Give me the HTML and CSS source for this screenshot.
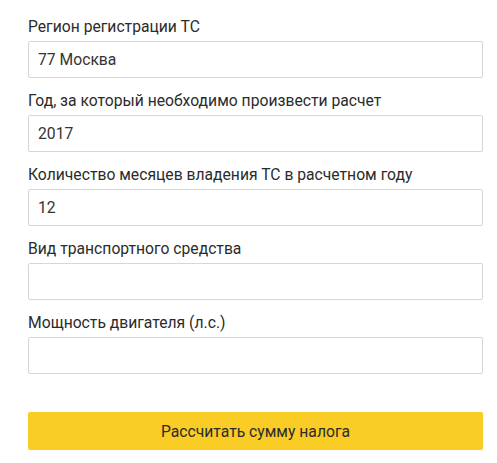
FILE: index.html
```html
<!DOCTYPE html>
<html lang="ru">
<head>
<meta charset="utf-8">
<link rel="stylesheet" href="styles.css">
</head>
<body>
<form class="calc">
  <div class="field">
    <label class="label">Регион регистрации ТС</label>
    <div class="input">77 Москва</div>
  </div>
  <div class="field">
    <label class="label">Год, за который необходимо произвести расчет</label>
    <div class="input">2017</div>
  </div>
  <div class="field">
    <label class="label">Количество месяцев владения ТС в расчетном году</label>
    <div class="input">12</div>
  </div>
  <div class="field">
    <label class="label">Вид транспортного средства</label>
    <div class="input"></div>
  </div>
  <div class="field">
    <label class="label">Мощность двигателя (л.с.)</label>
    <div class="input"></div>
  </div>
  <button type="button" class="submit">Рассчитать сумму налога</button>
</form>
</body>
</html>
```
FILE: styles.css
```css
html, body { margin: 0; padding: 0; background: #fff; }
body { font-family: Roboto, "Noto Sans", sans-serif; color: #2b2b2b; }
.calc {
  width: 455px;
  padding: 17px 0 0 28px;
  display: flex;
  flex-direction: column;
}
.field {
  display: flex;
  flex-direction: column;
  gap: 4px;
  margin-bottom: 13px;
}
.label {
  font-size: 15.7px;
  line-height: 20px;
  color: #2b2b2b;
}
.input {
  box-sizing: border-box;
  height: 37px;
  border: 1px solid #d6d6d6;
  border-radius: 2px;
  padding: 0 9px;
  font-size: 15.7px;
  line-height: 35px;
  color: #333;
}
.submit {
  margin-top: 25px;
  height: 38px;
  border: 0;
  border-radius: 2px;
  background: #f9cc26;
  font-family: Roboto, "Noto Sans", sans-serif;
  font-size: 15.7px;
  color: #2b2b2b;
  padding: 0;
}
```
